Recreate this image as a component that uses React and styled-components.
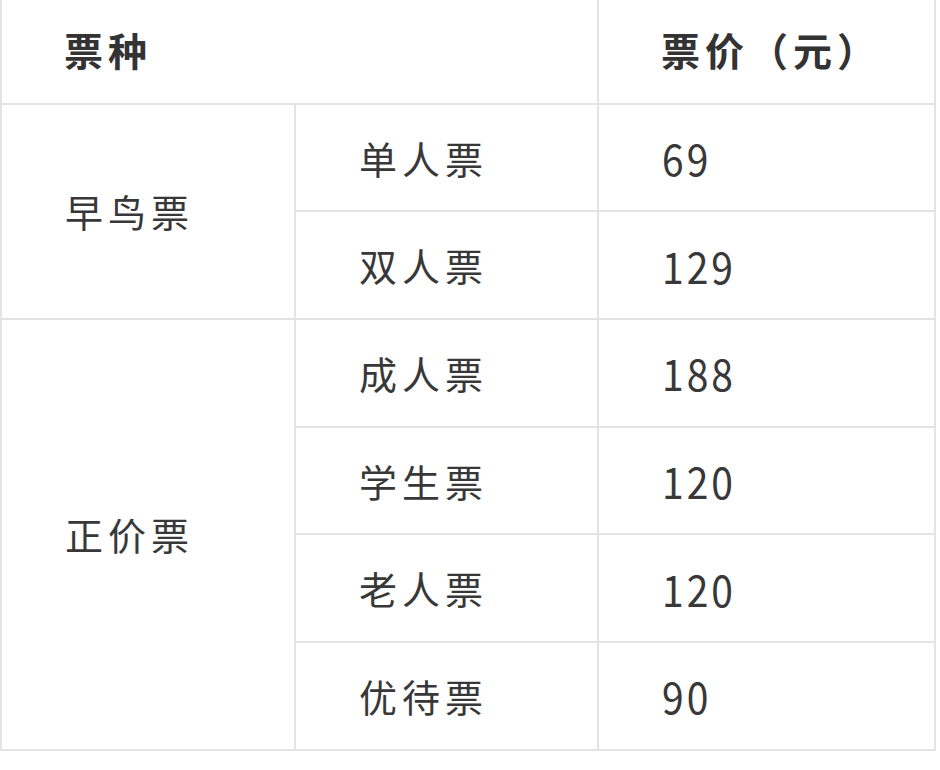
import React from "react";
import styled, { createGlobalStyle } from "styled-components";

const GlobalStyle = createGlobalStyle`
  html, body {
    margin: 0;
    padding: 0;
    background: #ffffff;
  }
  body {
    font-family: "Noto Sans CJK SC", "Noto Sans", sans-serif;
    color: #333333;
  }
`;

// --- WRAPPER ---
const Wrapper = styled.div`
  width: 940px;
  height: 770px;
  overflow: hidden;
  background: #ffffff;
`;

// --- TABLE ---
const Table = styled.table`
  width: 934px;
  margin-top: -5px;
  border-collapse: collapse;
  table-layout: fixed;
`;

const Col = styled.col`
  width: ${(p) => p.$w}px;
`;

const Row = styled.tr`
  height: 107.7px;
`;

const Cell = styled.td`
  border: 2px solid #e3e3e3;
  padding: 0 0 0 ${(p) => (p.$head ? 62 : 63)}px;
  font-size: ${(p) => (p.$head ? 39 : 38)}px;
  letter-spacing: 5px;
  font-weight: ${(p) => (p.$head ? 700 : 400)};
  color: ${(p) => (p.$head ? "#333333" : "#383838")};
  vertical-align: middle;
  text-align: left;
  line-height: 1;
  white-space: nowrap;
`;

const Num = styled.span`
  display: inline-block;
  font-size: 39px;
  letter-spacing: 3px;
  transform: scaleY(1.1);
`;

const groups = [
  {
    name: "早鸟票",
    items: [
      ["单人票", "69"],
      ["双人票", "129"],
    ],
  },
  {
    name: "正价票",
    items: [
      ["成人票", "188"],
      ["学生票", "120"],
      ["老人票", "120"],
      ["优待票", "90"],
    ],
  },
];

export default function App() {
  return (
    <Wrapper>
      <GlobalStyle />
      <Table>
        <colgroup>
          <Col $w={294} />
          <Col $w={303} />
          <Col $w={337} />
        </colgroup>
        <tbody>
          <Row>
            <Cell $head colSpan={2}>票种</Cell>
            <Cell $head>票价（元）</Cell>
          </Row>
          {groups.map((g) =>
            g.items.map(([type, price], i) => (
              <Row key={g.name + type}>
                {i === 0 && <Cell rowSpan={g.items.length}>{g.name}</Cell>}
                <Cell>{type}</Cell>
                <Cell>
                  <Num>{price}</Num>
                </Cell>
              </Row>
            ))
          )}
        </tbody>
      </Table>
    </Wrapper>
  );
}
